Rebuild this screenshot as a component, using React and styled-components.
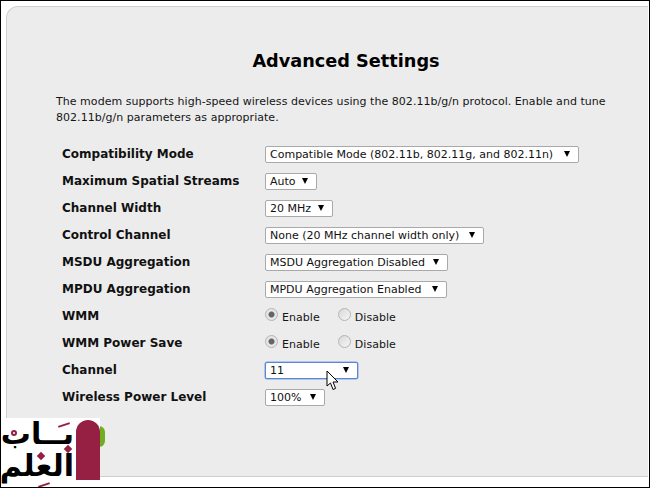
import React from 'react';
import styled, { createGlobalStyle } from 'styled-components';

const rows = [
  { label: 'Compatibility Mode', type: 'select', value: 'Compatible Mode (802.11b, 802.11g, and 802.11n)', width: 314 },
  { label: 'Maximum Spatial Streams', type: 'select', value: 'Auto', width: 52 },
  { label: 'Channel Width', type: 'select', value: '20 MHz', width: 68 },
  { label: 'Control Channel', type: 'select', value: 'None (20 MHz channel width only)', width: 219 },
  { label: 'MSDU Aggregation', type: 'select', value: 'MSDU Aggregation Disabled', width: 183 },
  { label: 'MPDU Aggregation', type: 'select', value: 'MPDU Aggregation Enabled', width: 182 },
  { label: 'WMM', type: 'radio' },
  { label: 'WMM Power Save', type: 'radio' },
  { label: 'Channel', type: 'select', value: '11', width: 93, focused: true },
  { label: 'Wireless Power Level', type: 'select', value: '100%', width: 60 },
];

const App = () => {
  return (
    <Frame>
      <GlobalStyle />
      <Panel>
        <Title>Advanced Settings</Title>
        <Intro>
          The modem supports high-speed wireless devices using the 802.11b/g/n protocol. Enable and tune
          802.11b/g/n parameters as appropriate.
        </Intro>
        <Form>
          {rows.map((row) => (
            <Row key={row.label}>
              <Label>{row.label}</Label>
              {row.type === 'select' ? (
                <SelectBox $width={row.width} $focused={row.focused}>
                  <span>{row.value}</span>
                  <Arrow />
                  {row.focused && <Cursor />}
                </SelectBox>
              ) : (
                <RadioGroup>
                  <Radio $checked />
                  <RadioText>Enable</RadioText>
                  <Radio />
                  <RadioText>Disable</RadioText>
                </RadioGroup>
              )}
            </Row>
          ))}
        </Form>
      </Panel>
      <GreenButton />
      <Logo>
        <LogoText>
          <LogoLine>بــاب</LogoLine>
          <LogoLine>العلم</LogoLine>
        </LogoText>
        <LogoMark />
        <Dash $left={58} $top={6} />
        <Dash $left={38} $top={66} />
        <Ring />
        <Diamond $left={65} $top={28} />
        <Diamond $left={38} $top={35} />
      </Logo>
    </Frame>
  );
};

export default App;

const Cursor = () => (
  <CursorSvg width="14" height="22" viewBox="0 0 14 22">
    <path
      d="M1 1 L1 16 L4.5 13 L7 19.5 L9.6 18.4 L7 12 L12 12 Z"
      fill="#fff"
      stroke="#000"
      strokeWidth="1"
      strokeLinejoin="miter"
    />
  </CursorSvg>
);

const GlobalStyle = createGlobalStyle`
  html, body {
    margin: 0;
    padding: 0;
    background: #fff;
  }
`;

const Frame = styled.div`
  position: relative;
  box-sizing: border-box;
  width: 650px;
  height: 488px;
  padding: 5px 1px 10px 5px;
  background: #fff;
  border: 1px solid #000;
  overflow: hidden;
  font-family: 'DejaVu Sans', Verdana, sans-serif;
  color: #111;
`;

const Panel = styled.div`
  box-sizing: border-box;
  height: 100%;
  padding: 43px 0 0 49px;
  background: #ececec;
  border: 1px solid #cfcfcf;
  border-right: none;
  border-top-left-radius: 12px;
`;

const Title = styled.h1`
  margin: 0 0 22px;
  padding-right: 12px;
  text-align: center;
  font-size: 17.7px;
  line-height: 22px;
  font-weight: bold;
  color: #000;
`;

const Intro = styled.p`
  margin: 0 30px 14px 0;
  font-size: 11px;
  letter-spacing: 0.04px;
  line-height: 16px;
  color: #151515;
`;

const Form = styled.div`
  display: flex;
  flex-direction: column;
  padding-left: 6px;
`;

const Row = styled.div`
  display: flex;
  align-items: center;
  height: 27px;
`;

const Label = styled.div`
  width: 203px;
  font-size: 12px;
  font-weight: bold;
  color: #111;
`;

const SelectBox = styled.div`
  position: relative;
  box-sizing: border-box;
  display: flex;
  align-items: center;
  justify-content: space-between;
  width: ${(p) => p.$width}px;
  height: 17px;
  margin-top: 2px;
  padding: 0 8px 0 4px;
  background: #fff;
  border: 1px solid ${(p) => (p.$focused ? '#5b86d6' : '#a9a9a9')};
  box-shadow: ${(p) => (p.$focused ? '0 0 0 0.5px #7ea0e0' : 'none')};
  border-radius: 2px;
  font-size: 11px;
  white-space: nowrap;
  color: #111;
`;

const Arrow = styled.i`
  width: 0;
  height: 0;
  margin-bottom: 2px;
  border-left: 3.5px solid transparent;
  border-right: 3.5px solid transparent;
  border-top: 6px solid #000;
`;

const CursorSvg = styled.svg`
  position: absolute;
  left: 60px;
  top: 7px;
`;

const RadioGroup = styled.div`
  display: flex;
  align-items: center;
  padding-top: 3px;
`;

const Radio = styled.span`
  box-sizing: border-box;
  width: 13px;
  height: 13px;
  margin-bottom: 5px;
  border-radius: 50%;
  border: 1px solid #b4b4b4;
  background: ${(p) =>
    p.$checked ? 'radial-gradient(circle, #666 0 2.5px, #e6e6e6 3.5px)' : 'linear-gradient(135deg, #d8d8d8, #f6f6f6)'};
`;

const RadioText = styled.span`
  margin: 0 18px 0 4px;
  font-size: 11px;
  letter-spacing: 0.05px;
  color: #151515;
`;

const GreenButton = styled.div`
  position: absolute;
  left: 92px;
  top: 425px;
  width: 12px;
  height: 21px;
  border-radius: 0 6px 6px 0;
  background: #6fae1e;
`;

const Logo = styled.div`
  position: absolute;
  left: -1px;
  top: 417px;
  display: flex;
  width: 100px;
  height: 71px;
  background: #fff;
`;

const LogoText = styled.div`
  width: 74px;
  margin-right: 2px;
  direction: rtl;
  font-family: 'DejaVu Sans', sans-serif;
  font-weight: bold;
  color: #000;
`;

const LogoLine = styled.div`
  height: 32px;
  font-size: 30px;
  line-height: 32px;
  text-align: right;
  white-space: nowrap;
`;

const LogoMark = styled.div`
  width: 24px;
  height: 60px;
  margin-top: 2px;
  border-radius: 12px 12px 0 0;
  background: #962044;
`;

const Dash = styled.span`
  position: absolute;
  left: ${(p) => p.$left}px;
  top: ${(p) => p.$top}px;
  width: 12px;
  height: 2px;
  background: #962044;
  transform: rotate(-18deg);
`;

const Ring = styled.span`
  position: absolute;
  left: 11px;
  top: 12px;
  box-sizing: border-box;
  width: 6px;
  height: 6px;
  border: 2px solid #962044;
  border-radius: 50%;
`;

const Diamond = styled.span`
  position: absolute;
  left: ${(p) => p.$left}px;
  top: ${(p) => p.$top}px;
  width: 6px;
  height: 6px;
  background: #962044;
  transform: rotate(45deg);
`;
